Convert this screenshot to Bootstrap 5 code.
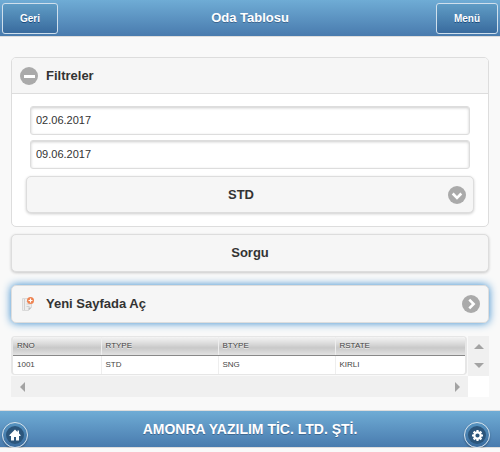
<!DOCTYPE html>
<html lang="tr">
<head>
<meta charset="utf-8">
<meta name="viewport" content="width=device-width, initial-scale=1">
<title>Oda Tablosu</title>
<link href="https://cdn.jsdelivr.net/npm/bootstrap@5.3.0/dist/css/bootstrap.min.css" rel="stylesheet">
<style>
body { font-family: "Liberation Sans", Arial, sans-serif; font-size: 13px; line-height: 16px; color: #333; background: #f9f9f9; }
.bar { background: linear-gradient(#6facd5, #497bae); color: #fff; text-shadow: 0 1px 0 #3e6790; border-bottom: 1px solid #ddd; padding: 0 2px; }
.bar h1, .bar h2 { font-size: 13px; line-height: 16px; }
.bar .footer-title { font-size: 14px; }
.bar-top { height: 37px; }
.bar-bottom { height: 38px; border-top: 1px solid #ddd; }
.bar-btn { color: #fff; font-size: 10px; line-height: 12px; font-weight: 700; text-shadow: 0 1px 0 #194b7e; padding: 9px 17px 8px; border: 1px solid #cfdfec; border-radius: 3px; background: linear-gradient(#5f9cc5, #396b9e); }
.bar-btn:hover { color: #fff; border-color: #fff; }
.round-btn { width: 26px; height: 26px; padding: 0; border: 1px solid #d9e4ed; border-radius: 50%; background: linear-gradient(#5693c0, #396b9e); box-shadow: 0 1px 2px rgba(0,0,0,.3); margin-top: 12px; }
.page-body { padding: 20px 11px 13px; }
.panel { border: 1px solid #ddd; border-radius: 5px; background: #fff; }
.panel-head { height: 36px; width: 100%; padding: 0 8px; border: 0; border-bottom: 1px solid #ddd; border-radius: 4px 4px 0 0; background: #f6f6f6; color: #333; font-weight: 700; }
.panel-fields { padding: 12px 14px 13px; }
.date-list { gap: 5px; padding: 0 4px; }
.date-box { height: 29px; padding: 0 5px 2px; font-size: 11px; line-height: 14px; color: #333; border: 1px solid #ddd; border-radius: 3px; box-shadow: inset 0 1px 3px rgba(0,0,0,.2); }
.soft-btn { border: 1px solid #ddd; border-radius: 5px; background: #f6f6f6; color: #333; font-size: 13px; line-height: 16px; font-weight: 700; height: 38px; text-shadow: 0 1px 0 #f3f3f3; box-shadow: 0 1px 3px rgba(0,0,0,.2); }
.room-type { height: 37px; text-align-last: center; background-image: none; padding: 0 30px 0 12px; margin-top: 7px; cursor: pointer; }
.room-icon { right: 8px; bottom: 9px; pointer-events: none; }
.query-btn { margin-top: 7px; }
.open-link, .open-link:hover { margin-top: 13px; border-color: #ddd; background: #f6f6f6; color: #333; padding: 0 8px; box-shadow: 0 0 8px #3388cc; }
.grid-area { display: grid; grid-template-columns: minmax(0, 1fr) 21px; grid-template-rows: auto 21px; margin-top: 13px; }
.grid-frame { border: solid #e6e6e6; border-width: 1px 2px; border-radius: 4px; overflow: hidden; margin-right: 1px; background: #fff; height: 39px; }
.rooms { font-size: 8px; line-height: 10px; color: #444; table-layout: fixed; width: 100%; height: 37px; border-collapse: collapse; }
.rooms th { font-weight: 400; height: 18px; padding: 0 4px; background: linear-gradient(#f4f4f4, #d8d8d8 40%, #c8c8c8 60%, #e2e2e2); border-bottom: 1px solid #888; text-shadow: 0 1px 0 #eee; }
.rooms td { padding: 1px 4px 0; }
.rooms th + th, .rooms td + td { border-left: 1px solid #eee; }
.col-first { width: 88px; }
.col-mid { width: 117px; }
.track { background: #f0f0f0; }
.track button { border: 0; background: none; padding: 0; width: 21px; height: 20px; display: flex; align-items: center; justify-content: center; }
.track-end { background: #fff; }
</style>
<script src="https://cdn.jsdelivr.net/npm/bootstrap@5.3.0/dist/js/bootstrap.bundle.min.js"></script>
</head>
<body>
<header class="bar bar-top d-flex align-items-center">
  <div class="col d-flex"><a href="#" class="bar-btn text-decoration-none">Geri</a></div>
  <h1 class="fw-bold m-0">Oda Tablosu</h1>
  <div class="col d-flex justify-content-end"><a href="#" class="bar-btn text-decoration-none">Menü</a></div>
</header>

<main class="page-body">
  <section class="panel">
    <button class="panel-head d-flex align-items-center gap-2" type="button" data-bs-toggle="collapse" data-bs-target="#filters" aria-expanded="true" aria-controls="filters">
      <svg width="18" height="18" viewBox="0 0 18 18" aria-hidden="true"><circle cx="9" cy="9" r="9" fill="#aaa"/><path d="M4 8h11v3H4z" fill="#fff"/></svg>
      <span>Filtreler</span>
    </button>
    <div id="filters" class="collapse show">
      <div class="panel-fields">
        <div class="date-list d-flex flex-column">
          <input class="date-box form-control" type="text" value="02.06.2017" aria-label="Başlangıç tarihi">
          <input class="date-box form-control" type="text" value="09.06.2017" aria-label="Bitiş tarihi">
        </div>
        <div class="position-relative">
          <select class="soft-btn room-type form-select" aria-label="Oda tipi"><option>STD</option></select>
          <svg class="room-icon position-absolute" width="18" height="18" viewBox="0 0 18 18" aria-hidden="true"><circle cx="9" cy="9" r="9" fill="#aaa"/><path d="M4.700 7.500 9 11.800l4.300-4.300" fill="none" stroke="#fff" stroke-width="2.600"/></svg>
        </div>
      </div>
    </div>
  </section>

  <button class="soft-btn query-btn btn w-100 p-0 d-block" type="button">Sorgu</button>

  <a href="#" class="soft-btn open-link btn w-100 d-flex align-items-center gap-2">
    <svg width="18" height="18" viewBox="0 0 18 18" aria-hidden="true">
      <path d="M2.500 3.500h9v9l-3 3h-6z" fill="#eee" stroke="#dadada"/><path d="M4.500 4v11M6.500 6.500h4M6.500 9h4M6.500 11.500h3" stroke="#d0d0d0"/><path d="M8.500 15.500v-3h3z" fill="#bbb"/>
      <circle cx="10.500" cy="5.500" r="3.500" fill="#ee8351"/><path d="M8.500 5.500h4M10.500 3.500v4" stroke="#fff" stroke-width="1.200"/>
    </svg>
    <span class="me-auto">Yeni Sayfada Aç</span>
    <svg width="18" height="18" viewBox="0 0 18 18" aria-hidden="true"><circle cx="9" cy="9" r="9" fill="#aaa"/><path d="m7.300 4.700 4.300 4.300-4.300 4.300" fill="none" stroke="#fff" stroke-width="2.600"/></svg>
  </a>

  <div class="grid-area">
    <div class="grid-frame">
      <table class="rooms">
        <colgroup><col class="col-first"><col class="col-mid"><col class="col-mid"><col></colgroup>
        <thead><tr><th scope="col">RNO</th><th scope="col">RTYPE</th><th scope="col">BTYPE</th><th scope="col">RSTATE</th></tr></thead>
        <tbody><tr><td>1001</td><td>STD</td><td>SNG</td><td>KIRLI</td></tr></tbody>
      </table>
    </div>
    <div class="track d-flex flex-column justify-content-between">
      <button type="button" aria-label="Yukarı"><svg width="10" height="6" viewBox="0 0 10 6"><path d="M0 6 5 1l5 5z" fill="#a3a3a3"/></svg></button>
      <button type="button" aria-label="Aşağı"><svg width="10" height="6" viewBox="0 0 10 6"><path d="m0 0 5 5 5-5z" fill="#a3a3a3"/></svg></button>
    </div>
    <div class="track d-flex justify-content-between align-items-center">
      <button type="button" aria-label="Sola"><svg width="6" height="10" viewBox="0 0 6 10"><path d="M6 0 1 5l5 5z" fill="#a3a3a3"/></svg></button>
      <button type="button" aria-label="Sağa"><svg width="6" height="10" viewBox="0 0 6 10"><path d="m0 0 5 5-5 5z" fill="#a3a3a3"/></svg></button>
    </div>
    <div class="track-end"></div>
  </div>
</main>

<footer class="bar bar-bottom d-flex align-items-center">
  <div class="col d-flex">
    <button class="round-btn d-flex align-items-center justify-content-center" type="button" aria-label="Ana sayfa">
      <svg width="18" height="18" viewBox="0 0 18 18"><circle cx="9" cy="9" r="9" fill="#2c567c"/><path d="M9 3.500 3.500 9v1H5v4.500h3V11h2v3.500h3V10h1.500V9L13 7.500V4.500h-1.500V6z" fill="#fff"/></svg>
    </button>
  </div>
  <h2 class="footer-title fw-bold m-0">AMONRA YAZILIM TİC. LTD. ŞTİ.</h2>
  <div class="col d-flex justify-content-end">
    <button class="round-btn me-2 d-flex align-items-center justify-content-center" type="button" aria-label="Ayarlar">
      <svg width="18" height="18" viewBox="0 0 18 18"><circle cx="9" cy="9" r="9" fill="#2c567c"/><g transform="translate(9.500 9.500)"><circle r="3.200" fill="none" stroke="#fff" stroke-width="2.200"/><g stroke="#fff" stroke-width="2.200"><path d="M0-5.500V-3.500M0 5.500V3.500M-5.500 0H-3.500M5.500 0H3.500M-3.900-3.900-2.700-2.700M3.900-3.900 2.700-2.700M-3.900 3.900-2.700 2.700M3.900 3.900 2.700 2.700"/></g></g></svg>
    </button>
  </div>
</footer>
</body>
</html>
